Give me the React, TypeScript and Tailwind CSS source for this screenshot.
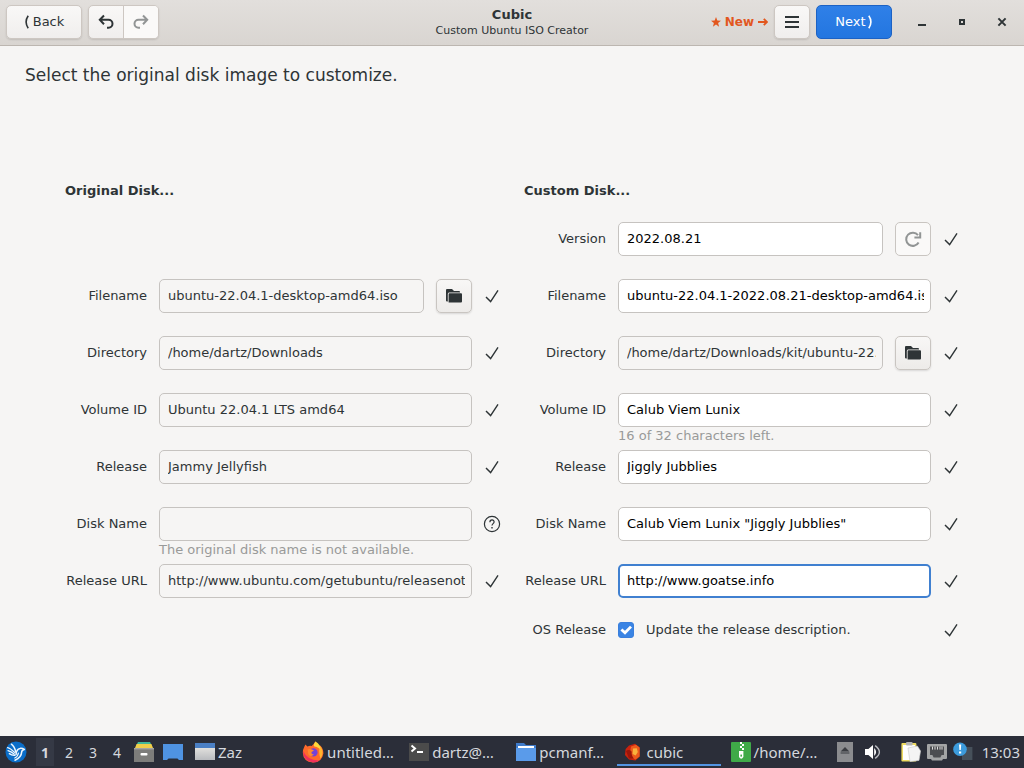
import React, { useState } from 'react';
import clsx from 'clsx';

type FieldData = {
  id: string;
  label: string;
  value?: string;
  editable?: boolean;
  focused?: boolean;
  action?: 'open' | 'reload';
  hint?: string;
  status?: 'ok' | 'unknown';
};

const originalFields: FieldData[] = [
  { id: 'orig-filename', label: 'Filename', value: 'ubuntu-22.04.1-desktop-amd64.iso', action: 'open' },
  { id: 'orig-directory', label: 'Directory', value: '/home/dartz/Downloads' },
  { id: 'orig-volume', label: 'Volume ID', value: 'Ubuntu 22.04.1 LTS amd64' },
  { id: 'orig-release', label: 'Release', value: 'Jammy Jellyfish' },
  {
    id: 'orig-disk',
    label: 'Disk Name',
    value: '',
    hint: 'The original disk name is not available.',
    status: 'unknown',
  },
  { id: 'orig-url', label: 'Release URL', value: 'http://www.ubuntu.com/getubuntu/releasenotes' },
];

const customFields: FieldData[] = [
  { id: 'version', label: 'Version', value: '2022.08.21', editable: true, action: 'reload' },
  { id: 'filename', label: 'Filename', value: 'ubuntu-22.04.1-2022.08.21-desktop-amd64.iso', editable: true },
  { id: 'directory', label: 'Directory', value: '/home/dartz/Downloads/kit/ubuntu-22.04.1', action: 'open' },
  { id: 'volume', label: 'Volume ID', value: 'Calub Viem Lunix', editable: true, hint: '16 of 32 characters left.' },
  { id: 'release', label: 'Release', value: 'Jiggly Jubblies', editable: true },
  { id: 'disk', label: 'Disk Name', value: 'Calub Viem Lunix "Jiggly Jubblies"', editable: true },
  { id: 'url', label: 'Release URL', value: 'http://www.goatse.info', editable: true, focused: true },
];

const headerButton =
  'h-[34px] rounded-[5px] border border-[#cdc7c2] bg-linear-to-b from-[#f9f8f7] to-[#f0eeed] shadow-[0_1px_2px_rgba(0,0,0,0.12)] flex items-center justify-center';

function CheckMark() {
  return (
    <svg viewBox="0 0 16 16" className="size-4 shrink-0" fill="none" stroke="#2e3436" strokeWidth="1.4">
      <path d="M2 9 L6.6 13.6 L14 2.4" />
    </svg>
  );
}

function QuestionMark() {
  return (
    <svg viewBox="0 0 16 16" className="size-4 shrink-0 overflow-visible" fill="none" stroke="#2e3436" strokeWidth="1.2">
      <circle cx="8" cy="8" r="7.6" />
      <path d="M5.9 6.2 C5.9 3.2 10.3 3.3 10.1 6 C10 7.6 8 7.7 8 9.6" />
      <path d="M8 11 V12.4" strokeWidth="1.4" />
    </svg>
  );
}

function FolderIcon() {
  return (
    <svg viewBox="0 0 16 16" className="size-4" fill="#2e3436">
      <path d="M0 2 Q0 1 1 1 H6 L8 3 H13 Q14 3 14 4 V4.5 H3 Q1.8 4.5 1.8 6 V13.5 H1 Q0 13.5 0 12.5 Z" />
      <path d="M3.4 5.2 H15 Q16 5.2 16 6.2 V13.6 Q16 14.6 15 14.6 H2.6 V6 Q2.6 5.2 3.4 5.2 Z" />
    </svg>
  );
}

function ReloadIcon() {
  return (
    <svg viewBox="0 0 16 16" className="size-4 overflow-visible" fill="none" stroke="#929595" strokeWidth="2">
      <path d="M13.6 11.4 A6.6 6.6 0 1 1 13 4.2" />
      <path d="M15.2 1.2 V6.4 H9.4" />
    </svg>
  );
}

function Field({ field }: { field: FieldData }) {
  const [value, setValue] = useState(field.value ?? '');
  return (
    <div className="grid grid-cols-[82px_minmax(0,1fr)_16px] gap-x-3">
      <label htmlFor={field.id} className="text-right leading-[34px] whitespace-nowrap">
        {field.label}
      </label>
      <div className="flex gap-3">
        <input
          id={field.id}
          type="text"
          value={value}
          readOnly={!field.editable}
          onChange={(e) => setValue(e.target.value)}
          className={clsx(
            'h-[34px] min-w-0 flex-1 rounded-[5px] pb-[2px] outline-none',
            field.editable ? 'bg-white text-black' : 'bg-transparent',
            field.focused ? 'border-2 border-[#4080d0] px-[7px]' : 'border border-[#c6c3c0] pr-[6px] pl-2',
          )}
        />
        {field.action && (
          <button
            type="button"
            aria-label={field.action === 'open' ? 'Open' : 'Reload'}
            className={clsx(
              'flex h-[34px] w-9 items-center justify-center rounded-[5px] border border-[#c9c5c1]',
              field.action === 'open'
                ? 'bg-linear-to-b from-[#f8f7f6] to-[#edebe9] shadow-[0_1px_2px_rgba(0,0,0,0.12)]'
                : 'bg-[#faf9f8]',
            )}
          >
            {field.action === 'open' ? <FolderIcon /> : <ReloadIcon />}
          </button>
        )}
      </div>
      <div className="flex h-[34px] items-center">
        {field.status === 'unknown' ? <QuestionMark /> : <CheckMark />}
      </div>
      <p className="col-start-2 h-[23px] leading-[18px] whitespace-nowrap text-[#999a99]">{field.hint}</p>
    </div>
  );
}

function HeaderBar() {
  return (
    <header className="grid grid-cols-[1fr_auto_1fr] items-center border-b border-[#bcb6b0] bg-linear-to-b from-[#e2dfdc] to-[#d9d5d1] px-[6px] pt-[5px] pb-[6px]">
      <div className="flex gap-[6px]">
        <button type="button" className={clsx(headerButton, 'w-[76px] gap-1')}>
          <svg viewBox="0 0 5 14" className="h-[14px] w-[5px]" fill="none" stroke="#2e3436" strokeWidth="1.6">
            <path d="M4.2 0.8 Q0 7 4.2 13.2" />
          </svg>
          Back
        </button>
        <div className={clsx(headerButton, 'w-[71px] overflow-hidden')}>
          <button
            type="button"
            aria-label="Undo"
            className="flex h-full flex-1 items-center justify-center border-r border-[#cdc7c2]"
          >
            <svg viewBox="0 0 16 16" className="size-4" fill="none" stroke="#2e3436" strokeWidth="2">
              <path d="M6 1.5 L1.8 5.8 L6 10.2 M2 5.8 H10.5 A4 4 0 0 1 10.5 13.8 H9" />
            </svg>
          </button>
          <button type="button" aria-label="Redo" className="flex h-full flex-1 items-center justify-center bg-[#faf9f8]">
            <svg viewBox="0 0 16 16" className="size-4" fill="none" stroke="#929595" strokeWidth="2">
              <path d="M10 1.5 L14.2 5.8 L10 10.2 M14 5.8 H5.5 A4 4 0 0 0 5.5 13.8 H7" />
            </svg>
          </button>
        </div>
      </div>

      <div className="pt-[2px] text-center">
        <h1 className="leading-4 font-bold">Cubic</h1>
        <p className="text-[11px] leading-4">Custom Ubuntu ISO Creator</p>
      </div>

      <div className="flex items-center justify-end gap-[6px]">
        <a href="#new" className="flex items-center gap-1 text-[12px] font-bold text-[#e2571e]">
          <svg viewBox="0 0 10 10" className="size-[10px]" fill="#e2571e">
            <path d="M5 0 L6.3 3.5 L10 3.7 L7.1 6 L8.1 9.7 L5 7.6 L1.9 9.7 L2.9 6 L0 3.7 L3.7 3.5 Z" />
          </svg>
          New
          <svg viewBox="0 0 10 10" className="size-[10px]" fill="none" stroke="#e2571e" strokeWidth="1.8">
            <path d="M0 5 H9 M5.8 1.8 L9 5 L5.8 8.2" />
          </svg>
        </a>
        <button type="button" aria-label="Menu" className={clsx(headerButton, 'w-9')}>
          <svg viewBox="0 0 16 16" className="size-4" fill="#2e3436">
            <path d="M1 2 H15 V4 H1 Z M1 7 H15 V9 H1 Z M1 12 H15 V14 H1 Z" />
          </svg>
        </button>
        <button
          type="button"
          className="flex h-[34px] w-[76px] items-center justify-center gap-[2px] rounded-[5px] border border-[#1c62c4] bg-linear-to-b from-[#2f80e8] to-[#2376e0] text-white"
        >
          Next
          <svg viewBox="0 0 5 14" className="h-[14px] w-[5px]" fill="none" stroke="#fff" strokeWidth="1.6">
            <path d="M0.8 0.8 Q5 7 0.8 13.2" />
          </svg>
        </button>
        <div className="ml-3 flex gap-4 pr-1">
          <button type="button" aria-label="Minimize" className="p-1">
            <svg viewBox="0 0 16 16" className="size-4" fill="#2e3436">
              <path d="M4 10 H12 V12 H4 Z" />
            </svg>
          </button>
          <button type="button" aria-label="Maximize" className="p-1">
            <svg viewBox="0 0 16 16" className="size-4" fill="none" stroke="#2e3436" strokeWidth="2">
              <rect x="6" y="6" width="4" height="4" />
            </svg>
          </button>
          <button type="button" aria-label="Close" className="p-1">
            <svg viewBox="0 0 16 16" className="size-4" fill="none" stroke="#2e3436" strokeWidth="2">
              <path d="M4.4 4.4 L11.6 11.6 M11.6 4.4 L4.4 11.6" />
            </svg>
          </button>
        </div>
      </div>
    </header>
  );
}

function LubuntuIcon() {
  return (
    <svg viewBox="0 0 22 22" className="size-[22px]">
      <circle cx="11" cy="11" r="10.5" fill="#0a6dc8" />
      <g fill="none" stroke="#eef6fd" strokeLinecap="round" strokeLinejoin="round">
        <path d="M2.6 6.6 Q5 7 9.6 11.4" strokeWidth="1.3" />
        <path d="M3 9.6 Q6 10.4 9.2 13" strokeWidth="1.3" />
        <path d="M4.4 12.6 Q7 14.6 10 14.2" strokeWidth="1.5" />
        <path d="M6.4 3.2 Q9.4 5.4 10.8 11" strokeWidth="1.5" />
        <path d="M11 13.6 Q11.4 8 15 7.4 Q17 7 19.4 8.4 Q16.6 8.8 16.6 11.4 Q16.4 16.4 10 19.2" strokeWidth="1.5" />
        <path d="M13.4 12 Q13 15.4 9.8 17" strokeWidth="1.2" />
      </g>
    </svg>
  );
}

function CabinetIcon() {
  return (
    <svg viewBox="0 0 20 20" className="size-5">
      <path d="M4 0 H16 L18 4 H2 Z" fill="#41b89a" />
      <path d="M2.6 2 H17.4 L19 6 H1 Z" fill="#f0cf4a" />
      <path d="M0 6 H20 V20 H0 Z" fill="#7d7d7b" />
      <path d="M0 6 H20 V7.4 H0 Z" fill="#a4a4a1" />
      <rect x="6.5" y="11" width="7" height="2.6" rx="1" fill="#fff" />
    </svg>
  );
}

function DesktopIcon() {
  return (
    <svg viewBox="0 0 20 20" className="size-5">
      <path d="M0 2 H20 V18 H16 L14.5 16.6 H5.5 L4 18 H0 Z" fill="#4f93e2" />
    </svg>
  );
}

function WindowIcon() {
  return (
    <svg viewBox="0 0 20 20" className="size-5">
      <defs>
        <linearGradient id="window-body" x1="0" y1="0" x2="0" y2="1">
          <stop offset="0" stopColor="#f1efe9" />
          <stop offset="1" stopColor="#b9bbbf" />
        </linearGradient>
      </defs>
      <rect y="1" width="20" height="17" fill="url(#window-body)" />
      <rect y="1" width="20" height="5" fill="#4a7fc4" />
    </svg>
  );
}

function FirefoxIcon() {
  return (
    <svg viewBox="0 0 22 22" className="size-[22px]">
      <path
        d="M2.2 6 L3.4 3.4 L5.4 5.4 Q7.8 4.6 9.6 5 Q11.4 4 13.4 0.6 Q15.4 2 16.6 5.4 L18.2 4.4 Q21.6 8 21.4 12.4 Q20 21.4 11 21.6 Q1.2 21 0.8 11.6 Q0.8 8.6 2.2 6 Z"
        fill="#ff6a2b"
      />
      <path d="M13.4 0.6 Q19 4 19.4 9.8 Q17 6 12.4 5.4 Q10.8 4.6 13.4 0.6 Z" fill="#ffd83a" />
      <path d="M19 6 Q22.4 12.4 18.4 17.4 Q16.6 12 17.4 8 Z" fill="#ffb52e" />
      <path d="M1 10 Q1.4 20.4 11 21.4 Q15 21.4 17.6 19.4 Q6 20 1 10 Z" fill="#f0305c" />
      <circle cx="11.4" cy="11.4" r="4.2" fill="#7542d8" />
      <path d="M5.6 8.4 Q9 7 12 9.4 L9.6 11 Q8.8 13 12 13.6 Q9 16.4 6.4 13.4 Z" fill="#ff8a2e" />
    </svg>
  );
}

function TerminalIcon() {
  return (
    <svg viewBox="0 0 20 20" className="size-5">
      <rect y="1" width="20" height="18" fill="#4b4b4b" />
      <path d="M2.5 3.6 L6 6.6 L2.5 9.6 M8 10 H14" fill="none" stroke="#fff" strokeWidth="2" />
    </svg>
  );
}

function FolderTaskIcon() {
  return (
    <svg viewBox="0 0 20 20" className="size-5">
      <path d="M0 1 H8 L10 3 H20 V19 H0 Z" fill="#3f7bca" />
      <path d="M2 4 H18 V7 H2 Z" fill="#fff" />
      <path d="M0 6 H20 V19 H0 Z" fill="#5a9bea" />
    </svg>
  );
}

function CubicIcon() {
  return (
    <svg viewBox="0 0 20 20" className="size-5">
      <path d="M6 3.4 L12 1.8 L16.6 5.4 V14.6 L12.4 18.4 L6 17.6 L2 13 L2.6 7 Z" fill="#c9220e" />
      <path d="M8 4.4 L13 2.8 L16.6 5.4 V14.6 L12.6 17.4 Q7 16 7 10 Z" fill="#ec5a1c" />
      <path d="M10 6.6 L13.8 6.2 L14.8 10 L12.6 13.6 L9.6 12 Z" fill="#f9b13c" />
      <path d="M3 9 Q6 7 8.6 9.4 Q8.4 14 11 16.6 L6 16.4 Z" fill="#9a160a" />
    </svg>
  );
}

function ArchiveIcon() {
  return (
    <svg viewBox="0 0 20 20" className="size-5">
      <rect width="20" height="20" rx="1" fill="#3faa48" />
      <path d="M9 0 H11 V2 H9 Z M11 2 H13 V4 H11 Z M9 4 H11 V6 H9 Z M11 6 H13 V8 H11 Z" fill="#fff" />
      <path d="M8 9 H12.4 V15 Q10.2 18.4 8 15 Z" fill="#fff" />
      <rect x="9.4" y="12.6" width="1.6" height="2" fill="#3faa48" />
    </svg>
  );
}

function EjectIcon() {
  return (
    <svg viewBox="0 0 16 20" className="h-5 w-4">
      <rect width="16" height="20" fill="#8b8c8f" />
      <path d="M8 5 L12.4 9.6 H3.6 Z M3.6 10.4 H12.4 V11.6 H3.6 Z" fill="#3b3d42" />
    </svg>
  );
}

function SpeakerIcon() {
  return (
    <svg viewBox="0 0 16 16" className="size-4">
      <path d="M0 5 H3.4 L8 1 V15 L3.4 11 H0 Z" fill="#fff" />
      <path d="M9.2 4 Q13 8 9.2 12 Z" fill="#fff" />
      <path d="M10.2 1.6 Q18.6 8 10.2 14.4" fill="none" stroke="#b9bbc0" strokeWidth="1.4" />
    </svg>
  );
}

function ClipboardIcon() {
  return (
    <svg viewBox="0 0 20 20" className="size-5">
      <rect x="0.4" y="1" width="15" height="18.6" rx="1" fill="#eedb62" />
      <rect x="2" y="3" width="12" height="15" fill="#fff" />
      <rect x="5" y="0" width="6.6" height="3.6" rx="1" fill="#b3b3b3" />
      <path d="M7 6 L16.4 4 L19.6 9 L18 18.4 L9 19.6 Z" fill="#f4f4f4" stroke="#c9c9c9" strokeWidth="0.6" />
    </svg>
  );
}

function NetworkIcon() {
  return (
    <svg viewBox="0 0 20 20" className="size-5">
      <path d="M1 2 H19 Q20 2 20 3 V16 Q20 17 19 17 H16 L15 18.6 H5 L4 17 H1 Q0 17 0 16 V3 Q0 2 1 2 Z" fill="#a3a4a5" />
      <path d="M3 4.6 H17 V13 H14.6 L13.4 15.6 H6.6 L5.4 13 H3 Z" fill="#4c4d51" />
      <path d="M5.5 4.6 V7.6 M8 4.6 V7.6 M10.5 4.6 V7.6 M13 4.6 V7.6 M15 4.6 V7.6" stroke="#dcdcdc" strokeWidth="1" />
    </svg>
  );
}

function NoticeIcon() {
  return (
    <svg viewBox="0 0 20 20" className="size-5">
      <rect x="9" y="5" width="10.4" height="13" fill="#46505a" />
      <circle cx="7" cy="7.2" r="6.8" fill="#3c9bdc" />
      <path d="M6 2.6 H8.2 L7.8 8 H6.4 Z M6 9.4 H8.2 V11.6 H6 Z" fill="#fff" />
    </svg>
  );
}

const tasks = [
  { title: 'Zaz', icon: WindowIcon },
  { title: 'untitled…', icon: FirefoxIcon },
  { title: 'dartz@…', icon: TerminalIcon },
  { title: 'pcmanf…', icon: FolderTaskIcon },
  { title: 'cubic', icon: CubicIcon, active: true },
  { title: '/home/…', icon: ArchiveIcon },
];

function Taskbar() {
  return (
    <nav className="flex h-8 items-center bg-[#2b2e39] pr-1 pl-[5px] font-['Noto_Sans','Open_Sans',sans-serif] text-[14px] text-[#d5d8de]">
      <button type="button" aria-label="Applications">
        <LubuntuIcon />
      </button>
      <div className="ml-[9px] flex gap-[6px]">
        {['1', '2', '3', '4'].map((n) => (
          <button
            key={n}
            type="button"
            className={clsx('h-7 w-[18px] text-center', n === '1' && 'bg-[#353945] font-bold')}
          >
            {n}
          </button>
        ))}
      </div>
      <div className="ml-2 flex gap-[9px]">
        <button type="button" aria-label="Files">
          <CabinetIcon />
        </button>
        <button type="button" aria-label="Show desktop">
          <DesktopIcon />
        </button>
      </div>
      <div className="ml-[6px] flex flex-1 gap-1">
        {tasks.map(({ title, icon: Icon, active }) => (
          <button
            key={title}
            type="button"
            className={clsx(
              'flex h-7 min-w-0 flex-1 items-center gap-[3px] border-y-2 border-t-transparent pl-[6px] text-[15px] whitespace-nowrap',
              active ? 'border-b-[#5294e2]' : 'border-b-transparent',
            )}
          >
            <Icon />
            {title}
          </button>
        ))}
      </div>
      <div className="ml-[9px] flex items-center">
        <EjectIcon />
        <div className="ml-3 flex items-center">
          <SpeakerIcon />
        </div>
        <div className="ml-5 flex items-center gap-[6px]">
          <ClipboardIcon />
          <NetworkIcon />
          <NoticeIcon />
        </div>
        <time className="ml-[9px] text-[15px]">13:03</time>
      </div>
    </nav>
  );
}

export default function App() {
  const [updateRelease, setUpdateRelease] = useState(true);

  return (
    <div className="flex min-h-screen flex-col bg-[#f6f5f4] font-['DejaVu_Sans',sans-serif] text-[13px] text-[#2e3436]">
      <HeaderBar />

      <main className="flex-1">
        <p className="px-[25px] pt-[17px] text-[17px] leading-6">Select the original disk image to customize.</p>

        <div className="grid grid-cols-2 gap-6 px-[65px] pt-[93px]">
          <section>
            <h2 className="leading-[22px] font-bold">Original Disk...</h2>
            <div className="pt-[77px]">
              {originalFields.map((f) => (
                <Field key={f.id} field={f} />
              ))}
            </div>
          </section>

          <section>
            <h2 className="leading-[22px] font-bold">Custom Disk...</h2>
            <div className="pt-5">
              {customFields.map((f) => (
                <Field key={f.id} field={f} />
              ))}
              <div className="grid grid-cols-[82px_minmax(0,1fr)_16px] items-center gap-x-3">
                <label htmlFor="os-release" className="text-right leading-[18px]">
                  OS Release
                </label>
                <div className="flex items-center gap-3">
                  <span className="relative size-4">
                    <input
                      id="os-release"
                      type="checkbox"
                      checked={updateRelease}
                      onChange={(e) => setUpdateRelease(e.target.checked)}
                      className="block size-4 appearance-none rounded-[3px] border border-[#c6c3c0] bg-white checked:border-[#3a7fdc] checked:bg-[#3a84e4]"
                    />
                    {updateRelease && (
                      <svg
                        viewBox="0 0 16 16"
                        className="pointer-events-none absolute inset-0 size-4"
                        fill="none"
                        stroke="#fff"
                        strokeWidth="2.8"
                      >
                        <path d="M3.4 7.4 L7 10.8 L13 4.6" />
                      </svg>
                    )}
                  </span>
                  <label htmlFor="os-release" className="leading-[18px]">
                    Update the release description.
                  </label>
                </div>
                <CheckMark />
              </div>
            </div>
          </section>
        </div>
      </main>

      <Taskbar />
    </div>
  );
}
